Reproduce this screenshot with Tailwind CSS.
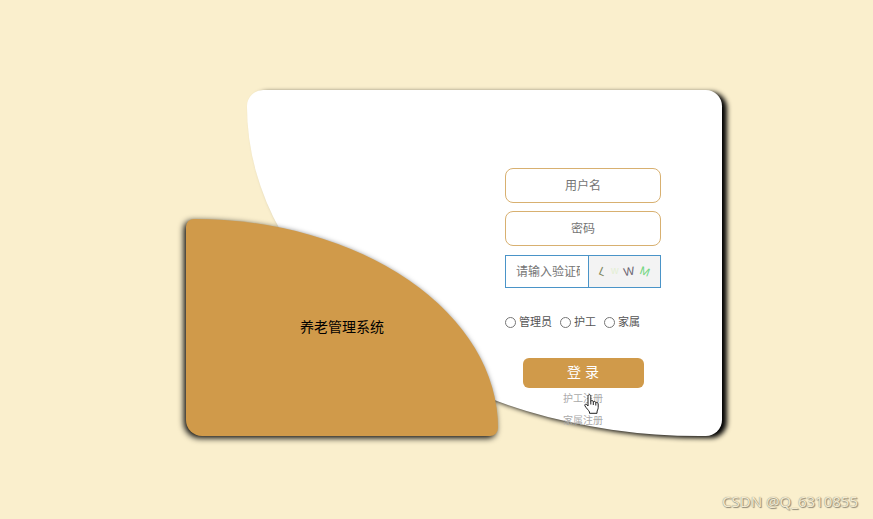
<!DOCTYPE html>
<html lang="zh-CN">
<head>
<meta charset="utf-8">
<meta name="viewport" content="width=device-width, initial-scale=1">
<title>养老管理系统</title>
<script src="https://cdn.jsdelivr.net/npm/@tailwindcss/browser@4"></script>
</head>
<body class="bg-[#faefcd] font-['Liberation_Sans','Noto_Sans_CJK_SC',sans-serif]">
<div class="relative flex min-h-screen items-center justify-center overflow-hidden pt-[7px] pl-[35px]">
  <main class="grid grid-cols-[61px_251px_224px] grid-rows-[129px_217px]">
    <section class="col-span-2 col-start-2 row-span-2 row-start-1 flex justify-end rounded-[17px_17px_17px_100%] bg-white pr-[61px] shadow-[5px_2px_5px_#000]">
      <form class="flex w-[156px] flex-col pt-[78px] text-xs text-[#555]">
        <input type="text" aria-label="用户名" placeholder="用户名" class="h-[35px] w-full rounded-lg border border-[#d8b070] text-center placeholder:text-[#757575]">
        <input type="password" aria-label="密码" placeholder="密码" class="mt-2 h-[35px] w-full rounded-lg border border-[#d8b070] text-center placeholder:text-[#757575]">
        <div class="mt-[9px] flex h-[33px] border border-[#4a94c8]">
          <input type="text" aria-label="验证码" placeholder="请输入验证码" class="w-[83px] border-r border-[#4a94c8] pr-2 pl-[10px] placeholder:text-[#757575]">
          <svg class="min-w-0 flex-1 bg-[#f3f3f3]" viewBox="0 0 72 32" role="img" aria-label="验证码图片" font-family="Liberation Sans, sans-serif">
            <text x="10" y="20" font-size="12" fill="#7c8660" transform="rotate(24 13 16)">L</text>
            <text x="22" y="19" font-size="11" fill="#e4efd4">w</text>
            <text x="35" y="20" font-size="12" fill="#69626f" transform="rotate(-10 40 16)">W</text>
            <text x="52" y="20" font-size="12" fill="#6fd680" transform="rotate(20 57 16)">M</text>
          </svg>
        </div>
        <div class="mt-[26px] flex h-4 items-center gap-2 text-[11px] whitespace-nowrap">
          <label class="flex items-center gap-[3px]"><input type="radio" name="role" class="size-[11px] appearance-none rounded-full border border-[#767676] bg-white">管理员</label>
          <label class="flex items-center gap-[3px]"><input type="radio" name="role" class="size-[11px] appearance-none rounded-full border border-[#767676] bg-white">护工</label>
          <label class="flex items-center gap-[3px]"><input type="radio" name="role" class="size-[11px] appearance-none rounded-full border border-[#767676] bg-white">家属</label>
        </div>
        <button type="button" class="mx-auto mt-7 h-[30px] w-[121px] cursor-pointer rounded-md bg-[#d09a4a] pb-0.5 text-sm text-white">登 录</button>
        <nav class="flex flex-col items-center gap-1.5 pt-[3px] text-[10px] leading-4 text-[#aaa]">
          <a href="#nurse">护工注册</a>
          <a href="#family">家属注册</a>
        </nav>
      </form>
    </section>
    <section class="col-span-2 col-start-1 row-start-2 flex items-center justify-center rounded-[8px_304px_8px_16px/8px_209px_8px_16px] bg-[#d09a4a] pb-0.5 shadow-[-2px_2px_6px_#000]">
      <h1 class="text-sm text-black">养老管理系统</h1>
    </section>
  </main>
  <svg class="absolute top-[394px] left-[584px] h-5 w-[15px]" viewBox="0 0 15 20" aria-hidden="true">
    <path d="M4 12V2.2C4 .2 6.800 .2 6.800 2.200V7.200C7.500 6 9.300 6.400 9.300 8C10 6.900 11.800 7.300 11.800 8.800C12.700 8 14.200 8.600 14.200 10V13.500C14.200 15.500 13 16.500 13 18V19.300H5.500V18C4.500 16 2.500 14.500 .9 11.800C.3 10.300 2 9.500 3 10.700Z" fill="#fff" stroke="#222" stroke-linejoin="round"/>
    <path d="M6.800 7V10.500M9.300 8V11M11.800 9V11.500" fill="none" stroke="#222"/>
  </svg>
  <p class="absolute right-[15px] bottom-[9px] font-['Noto_Sans',sans-serif] text-[15px] leading-[18px] text-[#f3ead0] [text-shadow:1px_1px_1px_#8d8776,0_0_1px_#77715f]">CSDN @Q_6310855</p>
</div>
</body>
</html>
